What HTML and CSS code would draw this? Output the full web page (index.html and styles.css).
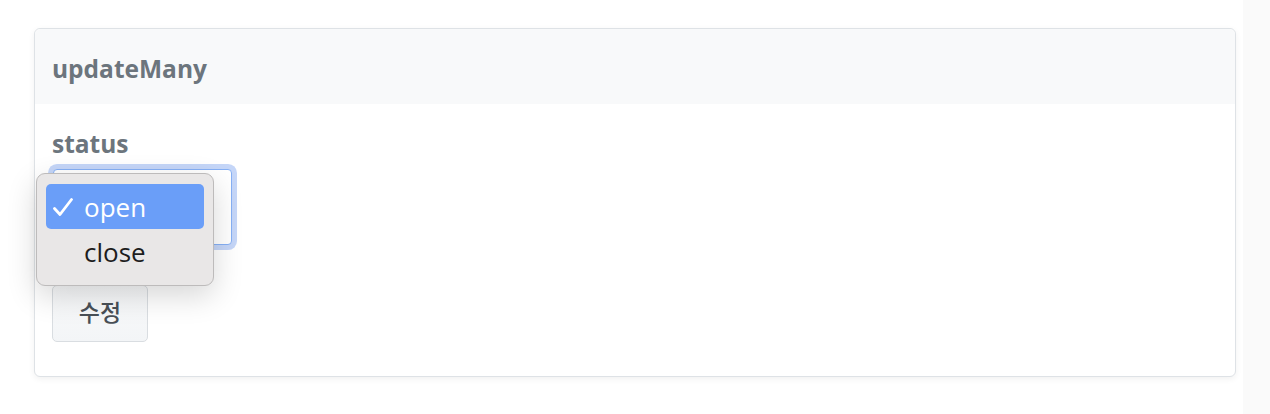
FILE: index.html
```html
<!DOCTYPE html>
<html lang="ko">
<head>
<meta charset="utf-8">
<title>updateMany</title>
<link rel="stylesheet" href="styles.css">
</head>
<body>
<main class="page">
  <section class="card">
    <header class="card-header">updateMany</header>
    <div class="card-body">
      <label class="field-label">status</label>
      <div class="select-wrap">
        <div class="select-box"></div>
        <ul class="popup">
          <li class="opt opt-active"><span class="check"><svg width="20" height="18" viewBox="0 0 20 18"><path d="M1.5 10.5 L7 16.5 L18.5 1.5" fill="none" stroke="#fff" stroke-width="2.8" stroke-linecap="round" stroke-linejoin="round"/></svg></span>open</li>
          <li class="opt"><span class="check"></span>close</li>
        </ul>
      </div>
      <button class="btn">수정</button>
    </div>
  </section>
</main>
</body>
</html>
```
FILE: styles.css
```css
html, body {
  margin: 0;
  padding: 0;
}
body {
  background: linear-gradient(to right, #ffffff 0, #ffffff 1243px, #fafafa 1243px);
  font-family: "Open Sans", "Noto Sans CJK KR", Arial, sans-serif;
  width: 1270px;
  height: 414px;
  overflow: hidden;
}
.page {
  padding: 28px 0 0 34px;
}
.card {
  width: 1200px;
  height: 347px;
  border: 1px solid #dee2e6;
  border-radius: 6px;
  background: #fff;
  box-shadow: 0 2px 6px rgba(0,0,0,0.06);
}
.card-header {
  background: #f8f9fa;
  border-radius: 6px 6px 0 0;
  height: 75px;
  box-sizing: border-box;
  padding: 4px 17px 0;
  display: flex;
  align-items: center;
  font-size: 24.5px;
  line-height: 30px;
  font-weight: 700;
  color: #6c757d;
}
.card-body {
  padding: 25px 17px 0;
  display: flex;
  flex-direction: column;
  align-items: flex-start;
}
.field-label {
  font-size: 24.5px;
  font-weight: 700;
  color: #6c757d;
  line-height: 30px;
}
.select-wrap {
  position: relative;
  margin-top: 10px;
  margin-left: 1px;
}
.select-box {
  width: 179px;
  height: 76px;
  box-sizing: border-box;
  border: 1px solid #86b0f5;
  border-radius: 4px;
  background: #fff;
  box-shadow: 0 0 0 5px rgba(80, 130, 235, 0.33);
}
.popup {
  position: absolute;
  left: -17px;
  top: 4px;
  width: 178px;
  height: 113px;
  box-sizing: border-box;
  margin: 0;
  padding: 10px 9px;
  list-style: none;
  background: #e9e7e7;
  border: 1px solid #bdbbbb;
  border-radius: 9px;
  box-shadow: 0 10px 30px rgba(0,0,0,0.16);
}
.opt {
  height: 45px;
  display: flex;
  align-items: center;
  font-size: 26px;
  color: #1d1d1d;
  border-radius: 5px;
  padding-left: 7px;
}
.opt-active {
  background: #6a9ef8;
  color: #fff;
}
.check {
  display: inline-flex;
  align-items: center;
  width: 31px;
  height: 20px;
}
.btn {
  margin-top: 40px;
  width: 96px;
  height: 57px;
  border: 1px solid #d9dde1;
  border-radius: 5px;
  background: linear-gradient(#f9fafb, #f3f5f7);
  color: #495057;
  font-family: "Noto Sans CJK KR", sans-serif;
  font-size: 23px;
  font-weight: 500;
  padding: 0 0 5px;
}
```
